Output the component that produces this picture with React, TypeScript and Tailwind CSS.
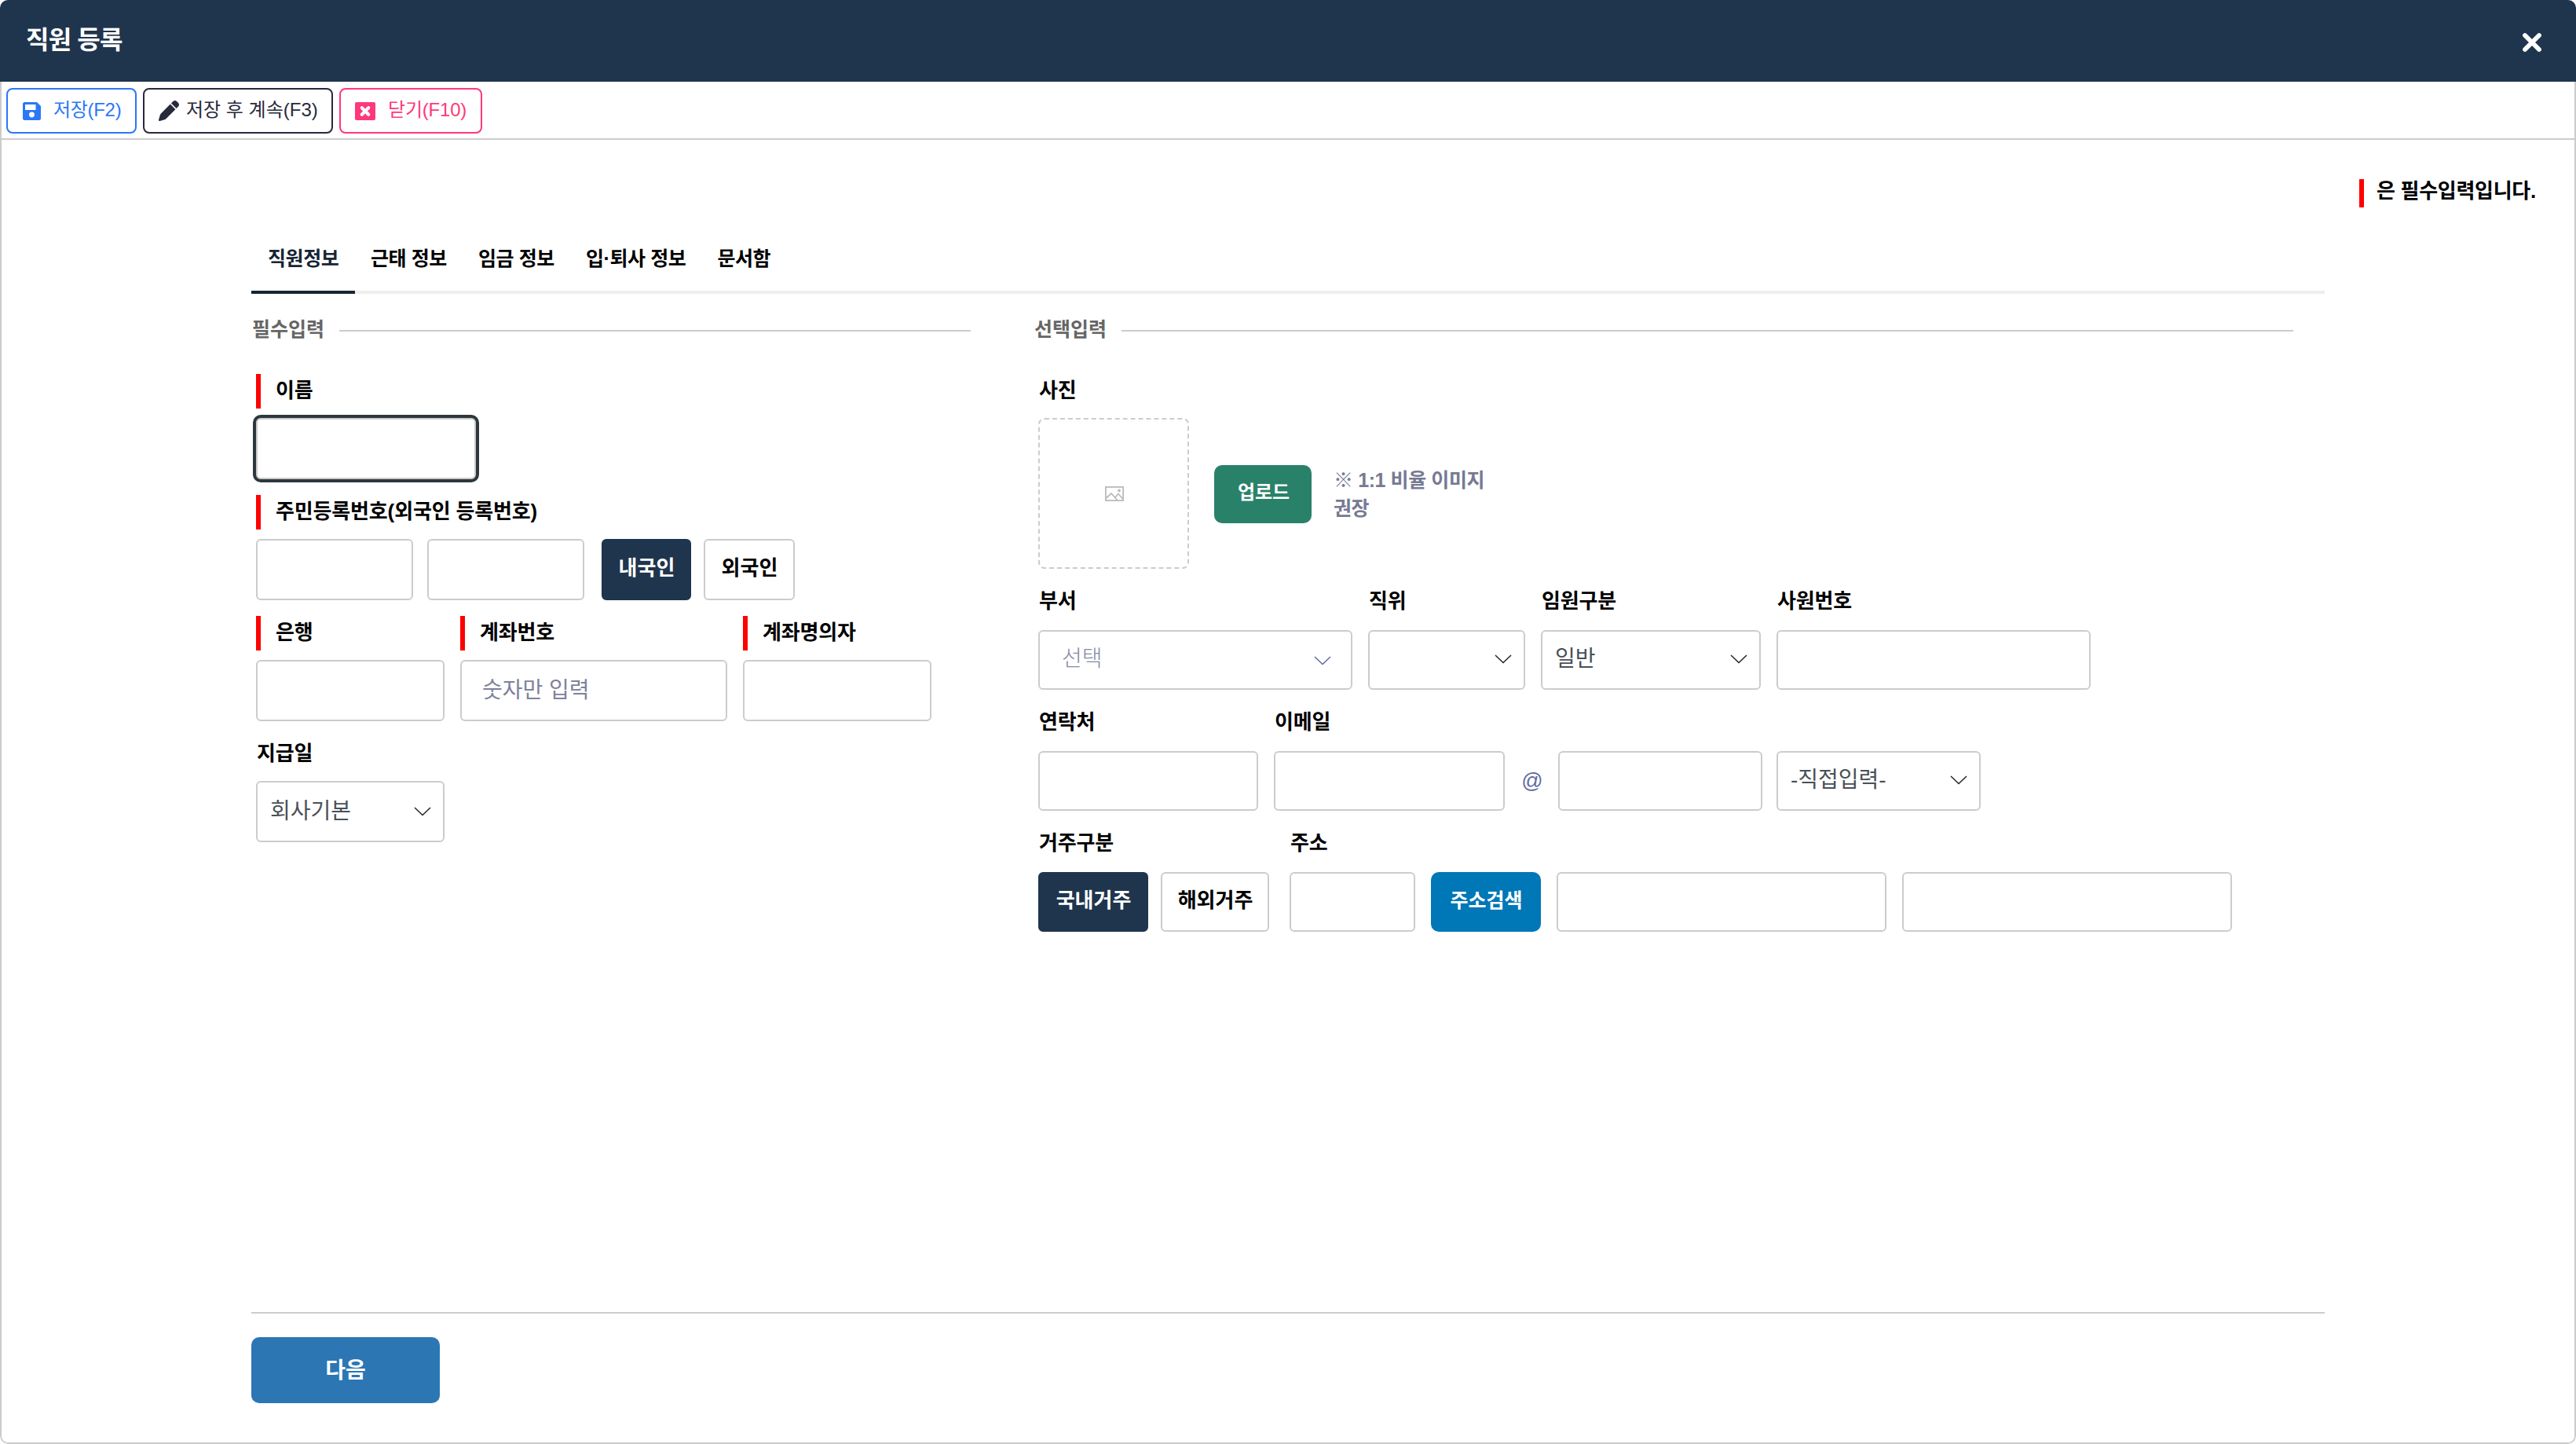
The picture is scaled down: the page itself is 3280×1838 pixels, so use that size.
import { FaPen } from 'react-icons/fa6';

type IconProps = { className?: string };

const CloseIcon = ({ className }: IconProps) => (
  <svg viewBox="0 0 26 26" className={className} stroke="currentColor" strokeWidth="5.800" strokeLinecap="round">
    <path d="M4 4l18 18M22 4L4 22" />
  </svg>
);

const SaveIcon = ({ className }: IconProps) => (
  <svg viewBox="0 0 23 23" className={className} fill="currentColor" fillRule="evenodd">
    <path d="M2.500 0h15.500l5 5v15.500a2.500 2.500 0 0 1-2.500 2.500h-18a2.500 2.500 0 0 1-2.500-2.500v-18a2.500 2.500 0 0 1 2.500-2.500zM3 3v7h13.500V3zM11.500 12.600a3.400 3.400 0 1 0 0 6.800a3.400 3.400 0 1 0 0-6.800z" />
  </svg>
);

const CloseBoxIcon = ({ className }: IconProps) => (
  <svg viewBox="0 0 26 23" className={className}>
    <rect width="26" height="23" rx="2" fill="currentColor" />
    <path d="M8.800 7.300l8.400 8.400M17.200 7.300l-8.400 8.400" stroke="#fff" strokeWidth="4.200" strokeLinecap="round" />
  </svg>
);

const ImageIcon = ({ className }: IconProps) => (
  <svg viewBox="0 0 24 19" className={className} fill="none" stroke="currentColor" strokeWidth="1.800">
    <rect x=".9" y=".9" width="22.200" height="17.200" />
    <path d="M1.500 15l6.500-6 8 9M13 14l4-4.500 6 7" />
    <circle cx="18" cy="5.500" r="1" />
  </svg>
);

const Chevron = ({ className }: IconProps) => (
  <svg viewBox="0 0 22 12" className={`h-3 w-[22px] shrink-0 ${className ?? 'text-[#212529]'}`} fill="none" stroke="currentColor" strokeWidth="1.500">
    <path d="M1 1l10 9.500L21 1" />
  </svg>
);

const TABS = ['직원정보', '근태 정보', '임금 정보', '입·퇴사 정보', '문서함'];

interface FieldProps {
  label: string;
  required?: boolean;
  className?: string;
  children: React.ReactNode;
}

function Field({ label, required, className = '', children }: FieldProps) {
  return (
    <div className={className}>
      <div className={`flex h-11 text-[26px] leading-[43px] font-bold tracking-[-0.15px] whitespace-nowrap text-black ${required ? 'border-l-[6px] border-[#ff0000] pl-[19px]' : 'pl-px'}`}>
        {label}
      </div>
      {children}
    </div>
  );
}

const Input = ({ className = '', placeholder }: { className?: string; placeholder?: string }) => (
  <input
    placeholder={placeholder}
    className={`block rounded-md border-2 border-[#ccc] bg-white px-[26px] text-[28px] text-[#495057] outline-none placeholder:text-[#7e829b] ${className}`}
  />
);

function Select({ value, className = '' }: { value?: string; className?: string }) {
  return (
    <div className={`flex items-center justify-between rounded-md border-2 border-[#ccc] bg-white pr-[15px] pl-4 text-[28px] text-[#495057] ${className}`}>
      <span>{value}</span>
      <Chevron />
    </div>
  );
}

function Toggle({ label, active, className = '' }: { label: string; active?: boolean; className?: string }) {
  return (
    <button
      className={`rounded-md border-2 pb-1 pl-px text-[26px] leading-none font-bold whitespace-nowrap ${
        active ? 'border-[#1f354d] bg-[#1f354d] text-white' : 'border-[#ccc] bg-white text-black'
      } ${className}`}
    >
      {label}
    </button>
  );
}

const SectionTitle = ({ children }: { children: React.ReactNode }) => (
  <div className="flex h-[30px] items-center text-[25px] leading-[30px] font-bold text-[#666]">
    <span className="-mt-1 w-28 shrink-0 pl-px">{children}</span>
    <span className="h-0.5 flex-1 bg-[#ccc]" />
  </div>
);

export default function App() {
  return (
    <div className="flex h-[1838px] w-[3280px] flex-col overflow-hidden rounded-[10px] bg-white font-['Liberation_Sans','Noto_Sans_CJK_KR',sans-serif]">
      <header className="flex h-[104px] shrink-0 items-center justify-between bg-[#1f354d] pr-[43px] pl-[33px] text-white">
        <h1 className="-mt-0.5 text-[32px] font-bold tracking-[-0.8px]">직원 등록</h1>
        <CloseIcon className="mt-1 size-[26px]" />
      </header>

      <div className="flex flex-1 flex-col rounded-b-[10px] border-x-2 border-b-2 border-[#ccc]">
        <div className="flex h-[74px] gap-2 border-b-2 border-[#ccc] px-1.5 pt-2 text-[24px] leading-none">
          <button className="flex h-[58px] w-[166px] items-center rounded-lg border-2 border-[#2b78f6] pl-[19px] text-[#2b78f6]">
            <SaveIcon className="mr-4 size-[23px]" />
            <span className="-mt-[3px] tracking-[-0.3px]">저장(F2)</span>
          </button>
          <button className="flex h-[58px] w-[242px] items-center rounded-lg border-2 border-[#282a3c] pl-[18px] text-[#282a3c]">
            <FaPen className="mr-[9px] size-[26px]" />
            <span className="-mt-[3px] whitespace-nowrap">저장 후 계속(F3)</span>
          </button>
          <button className="flex h-[58px] w-[182px] items-center rounded-lg border-2 border-[#ff3879] pl-[18px] text-[#ff3879]">
            <CloseBoxIcon className="mr-4 h-[23px] w-[26px]" />
            <span className="-mt-[3px] tracking-[-0.2px]">닫기(F10)</span>
          </button>
        </div>

        <div className="mt-[50px] mr-[48px] flex h-9 w-[226px] self-end border-l-[6px] border-[#ff0000] pl-4 text-[26px] leading-[31px] font-bold tracking-[-0.3px] whitespace-nowrap text-black">
          은 필수입력입니다.
        </div>

        <div className="mr-[318px] ml-[318px] flex h-[110px] border-b-4 border-[#eee] text-[25px] leading-[30px] font-bold tracking-[-0.4px] text-black">
          {TABS.map((tab, i) => (
            <div key={tab} className={`h-[110px] pt-[50px] ${i === 0 ? 'w-[132px] border-b-4 border-[#172533] pl-[21px] text-[#172533]' : 'px-5'}`}>
              {tab}
            </div>
          ))}
        </div>

        <div className="mt-8 ml-[318px] flex h-[1264px]">
          <section className="w-[916px]">
            <SectionTitle>필수입력</SectionTitle>
            <div className="mt-10 ml-1.5 flex flex-col gap-5">
              <Field label="이름" required>
                <Input className="mt-3 h-[78px] w-[280px] outline-4! outline-[#2d373c]! outline-solid!" />
              </Field>
              <Field label="주민등록번호(외국인 등록번호)" required>
                <div className="mt-3 flex">
                  <Input className="h-[78px] w-[200px]" />
                  <Input className="ml-[18px] h-[78px] w-[200px]" />
                  <Toggle label="내국인" active className="ml-[22px] h-[78px] w-[114px]" />
                  <Toggle label="외국인" className="ml-4 h-[78px] w-[116px]" />
                </div>
              </Field>
              <div className="flex gap-5">
                <Field label="은행" required>
                  <Input className="mt-3 h-[78px] w-[240px]" />
                </Field>
                <Field label="계좌번호" required>
                  <Input className="mt-3 h-[78px] w-[340px]" placeholder="숫자만 입력" />
                </Field>
                <Field label="계좌명의자" required>
                  <Input className="mt-3 h-[78px] w-[240px]" />
                </Field>
              </div>
              <Field label="지급일">
                <Select value="회사기본" className="mt-3 h-[78px] w-[240px]" />
              </Field>
            </div>
          </section>

          <section className="ml-20 w-[1604px]">
            <SectionTitle>선택입력</SectionTitle>
            <div className="mt-10 ml-1.5 flex flex-col gap-5">
              <Field label="사진">
                <div className="mt-3 flex items-center">
                  <div className="flex size-48 items-center justify-center rounded-lg border-2 border-dashed border-[#ccc] pl-px text-[#bbb]">
                    <ImageIcon className="h-[19px] w-6" />
                  </div>
                  <button className="mt-0.5 ml-8 h-[74px] w-[124px] rounded-[10px] bg-[#2a816a] pb-1 pl-0.5 text-[24px] leading-none font-bold text-white">
                    업로드
                  </button>
                  <p className="mt-px ml-7 w-[200px] text-[25px] leading-9 font-bold tracking-[-0.4px] text-[#767a92]">※ 1:1 비율 이미지 권장</p>
                </div>
              </Field>
              <div className="flex gap-5">
                <Field label="부서">
                  <div className="mt-3.5 flex h-[76px] w-[400px] items-center justify-between rounded-md border-2 border-[#ccc] pr-[25px] pb-0.5 pl-7 text-[28px] font-light text-[#858aa3]">
                    <span>선택</span>
                    <Chevron className="mt-1 text-[#5f6ca0]" />
                  </div>
                </Field>
                <Field label="직위">
                  <Select className="mt-3.5 h-[76px] w-[200px] pb-0.5" />
                </Field>
                <Field label="임원구분">
                  <Select value="일반" className="mt-3.5 h-[76px] w-[280px] pb-0.5" />
                </Field>
                <Field label="사원번호">
                  <Input className="mt-3.5 h-[76px] w-[400px]" />
                </Field>
              </div>
              <div className="flex gap-5">
                <Field label="연락처">
                  <Input className="mt-3.5 h-[76px] w-[280px]" />
                </Field>
                <Field label="이메일">
                  <div className="mt-3.5 flex items-center">
                    <Input className="h-[76px] w-[294px]" />
                    <span className="w-[68px] pl-0.5 text-center text-[27px] text-[#5f6ca0]">@</span>
                    <Input className="h-[76px] w-[260px]" />
                    <Select value="-직접입력-" className="ml-[18px] h-[76px] w-[260px] pb-0.5" />
                  </div>
                </Field>
              </div>
              <div className="flex gap-[26px]">
                <Field label="거주구분">
                  <div className="mt-3.5 flex gap-4">
                    <Toggle label="국내거주" active className="h-[76px] w-[140px]" />
                    <Toggle label="해외거주" className="h-[76px] w-[138px]" />
                  </div>
                </Field>
                <Field label="주소">
                  <div className="mt-3.5 flex gap-5">
                    <Input className="h-[76px] w-40" />
                    <button className="h-[76px] w-[140px] rounded-[10px] bg-[#0077b6] pb-1 pl-px text-[25px] leading-none font-bold text-white">
                      주소검색
                    </button>
                    <Input className="h-[76px] w-[420px]" />
                    <Input className="h-[76px] w-[420px]" />
                  </div>
                </Field>
              </div>
            </div>
          </section>
        </div>

        <footer className="mx-[318px] border-t-2 border-[#ccc] pt-[30px]">
          <button className="h-[84px] w-60 rounded-[10px] bg-[#2c76b4] pt-0.5 text-[28px] leading-none font-bold text-white">다음</button>
        </footer>
      </div>
    </div>
  );
}
